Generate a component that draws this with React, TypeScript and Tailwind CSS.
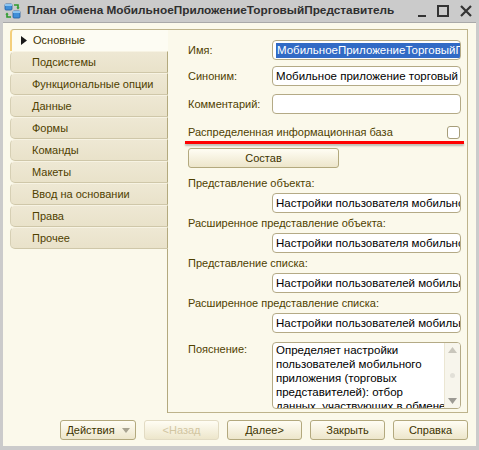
import React from "react";

const tabs = [
  "Основные",
  "Подсистемы",
  "Функциональные опции",
  "Данные",
  "Формы",
  "Команды",
  "Макеты",
  "Ввод на основании",
  "Права",
  "Прочее",
];

const fieldFont = { fontFamily: '"Liberation Sans", Arial, sans-serif' };

function ExchangeIcon() {
  return (
    <svg width="17" height="16" viewBox="0 0 17 16">
      <rect x="1" y="1" width="7" height="6" rx="1" fill="#3f8fd8" stroke="#1f5c9e" strokeWidth="0.8" />
      <rect x="1" y="1" width="7" height="2" fill="#8cc4f0" />
      <rect x="9" y="8" width="7" height="7" rx="1" fill="#3f8fd8" stroke="#1f5c9e" strokeWidth="0.8" />
      <rect x="9" y="8" width="7" height="2" fill="#8cc4f0" />
      <path d="M10 2 h4 v3" stroke="#2e9a2e" strokeWidth="1.6" fill="none" />
      <path d="M12.3 4.5 L14 6.5 L15.7 4.5 Z" fill="#2e9a2e" />
      <path d="M7 14 h-4 v-3" stroke="#2e9a2e" strokeWidth="1.6" fill="none" />
      <path d="M1.3 11.5 L3 9.5 L4.7 11.5 Z" fill="#2e9a2e" />
    </svg>
  );
}

function Field({ value, selected = false }: { value: string; selected?: boolean }) {
  return (
    <div className="ml-auto flex h-[20px] w-[189px] shrink-0 items-center overflow-hidden rounded-[4px] border border-[#b4aa86] bg-white pl-[3px] text-[11.5px] leading-[14px] whitespace-nowrap text-black">
      {selected ? (
        <span className="bg-[#316ac5] px-px leading-[15px] text-white">{value}</span>
      ) : (
        <span>{value}</span>
      )}
    </div>
  );
}

function Label({ children }: { children: React.ReactNode }) {
  return (
    <span className="block h-[14px] text-[11px] leading-[14px] whitespace-nowrap text-[#4f4100]">
      {children}
    </span>
  );
}

function Btn({
  children,
  disabled = false,
  width = "w-[75px]",
}: {
  children: React.ReactNode;
  disabled?: boolean;
  width?: string;
}) {
  return (
    <div
      className={
        "flex h-[20px] shrink-0 items-center justify-center rounded-[3px] border bg-gradient-to-b from-[#fffdf4] to-[#ede6cb] text-[11px] " +
        width +
        (disabled ? " border-[#e2dbc3] text-[#d2c6a2]" : " border-[#b3a97e] text-[#3d3300]")
      }
    >
      {children}
    </div>
  );
}

export default function App() {
  return (
    <div
      className="flex h-[450px] w-[479px] flex-col bg-[#cbcbcb] px-[3px] pb-[4px]"
      style={fieldFont}
    >
      {/* title bar */}
      <div className="flex h-[22px] shrink-0 items-center pl-[1px]">
        <ExchangeIcon />
        <span className="ml-[6px] text-[11.8px] font-bold whitespace-nowrap text-[#2f2f2f]">
          План обмена МобильноеПриложениеТорговыйПредставитель
        </span>
        <div className="ml-auto flex items-center gap-[11px] pr-[4px] text-[#333]">
          <div className="mt-[10px] h-[2px] w-[8px] bg-[#333]" />
          <div className="h-[12px] w-[12px] border-[2px] border-[#333]" />
          <svg width="12" height="12" viewBox="0 0 12 12">
            <path d="M1 1 L11 11 M11 1 L1 11" stroke="#333" strokeWidth="2.2" />
          </svg>
        </div>
      </div>

      {/* window body */}
      <div className="flex flex-1 flex-col border-t border-[#a9a9a9] bg-[#fbf9eb] pt-[6px] pr-[8px] pl-[7px]">
        <div className="flex h-[384px] shrink-0">
          {/* tabs */}
          <div className="flex w-[158px] shrink-0 flex-col">
            {tabs.map((t, i) =>
              i === 0 ? (
                <div
                  key={t}
                  className="flex h-[22px] items-center rounded-tl-[4px] border-t border-l-[2px] border-t-[#bdb38b] border-l-[#f4cf7c] bg-[#fdfcf3] pl-[9px] text-[11px] text-[#3f3300]"
                >
                  <svg width="6" height="9" viewBox="0 0 6 9" className="mr-[6px]">
                    <path d="M0 0 L6 4.5 L0 9 Z" fill="#1a1a1a" />
                  </svg>
                  {t}
                </div>
              ) : (
                <div
                  key={t}
                  className="flex h-[22px] items-center rounded-l-[5px] border-t border-r border-b border-l border-t-[#f7f3e3] border-r-[#b3a97e] border-b-[#cfc7a9] border-l-[#d6cfb4] bg-gradient-to-b from-[#eee8d4] to-[#e9e2ca] pl-[21px] text-[11px] whitespace-nowrap text-[#4f4100]"
                >
                  {t}
                </div>
              )
            )}
            <div className="flex-1 border-r border-[#b3a97e]" />
          </div>

          {/* pane */}
          <div className="flex min-w-0 flex-1 flex-col border-t border-r border-b border-[#bdb38b] pt-[10px] pr-[6px] pl-[20px]">
            <div className="flex h-[20px] items-center">
              <Label>Имя:</Label>
              <Field value="МобильноеПриложениеТорговыйПредставитель" selected />
            </div>
            <div className="mt-[6px] flex h-[20px] items-center">
              <Label>Синоним:</Label>
              <Field value="Мобильное приложение торговый представитель" />
            </div>
            <div className="mt-[8px] flex h-[20px] items-center">
              <Label>Комментарий:</Label>
              <Field value="" />
            </div>
            <div className="mt-[10px] flex h-[16px] items-center">
              <Label>Распределенная информационная база</Label>
              <div className="mr-px ml-auto h-[13px] w-[13px] rounded-[3px] border border-[#a79e7a] bg-white" />
            </div>
            <div className="mt-[1px] mr-[-3px] -ml-[3px] h-[3px] shrink-0 bg-[#ff0000] shadow-[0_2px_2px_rgba(0,0,0,0.25)]" />
            <div className="mt-[4px]">
              <Btn width="w-[151px]">Состав</Btn>
            </div>

            <div className="mt-[8px]">
              <Label>Представление объекта:</Label>
            </div>
            <div className="mt-[3px] flex">
              <Field value="Настройки пользователя мобильного приложения" />
            </div>
            <div className="mt-[3px]">
              <Label>Расширенное представление объекта:</Label>
            </div>
            <div className="mt-[3px] flex">
              <Field value="Настройки пользователя мобильного приложения" />
            </div>
            <div className="mt-[3px]">
              <Label>Представление списка:</Label>
            </div>
            <div className="mt-[3px] flex">
              <Field value="Настройки пользователей мобильного приложения" />
            </div>
            <div className="mt-[3px]">
              <Label>Расширенное представление списка:</Label>
            </div>
            <div className="mt-[3px] flex">
              <Field value="Настройки пользователей мобильного приложения" />
            </div>

            <div className="mt-[9px] flex">
              <Label>Пояснение:</Label>
              <div className="ml-auto flex h-[67px] w-[189px] shrink-0 overflow-hidden rounded-[4px] border border-[#b4aa86] bg-white">
                <div className="h-full flex-1 overflow-hidden pl-[3px] text-[11.5px] leading-[14px] whitespace-nowrap text-black">
                  Определяет настройки
                  <br />
                  пользователей мобильного
                  <br />
                  приложения (торговых
                  <br />
                  представителей): отбор
                  <br />
                  данных, участвующих в обмене
                </div>
                <div className="flex w-[16px] flex-col items-center justify-between border-l border-[#ebe6d3] bg-[#f7f5ec] py-[4px]">
                  <svg width="9" height="6" viewBox="0 0 9 6">
                    <path d="M0 6 L4.5 0 L9 6 Z" fill="#c9c6bc" />
                  </svg>
                  <div className="h-[5px] w-[5px] rounded-full bg-[#e2e0d8]" />
                  <svg width="9" height="6" viewBox="0 0 9 6">
                    <path d="M0 0 L4.5 6 L9 0 Z" fill="#9c9a94" />
                  </svg>
                </div>
              </div>
            </div>
          </div>
        </div>

        {/* bottom buttons */}
        <div className="mt-[7px] flex justify-end gap-[8px]">
          <Btn width="w-[76px]">
            <span>Действия</span>
            <svg width="8" height="5" viewBox="0 0 8 5" className="ml-[7px]">
              <path d="M0 0 L4 5 L8 0 Z" fill="#a8a390" />
            </svg>
          </Btn>
          <Btn disabled>&lt;Назад</Btn>
          <Btn>Далее&gt;</Btn>
          <Btn>Закрыть</Btn>
          <Btn>Справка</Btn>
        </div>
      </div>
    </div>
  );
}
